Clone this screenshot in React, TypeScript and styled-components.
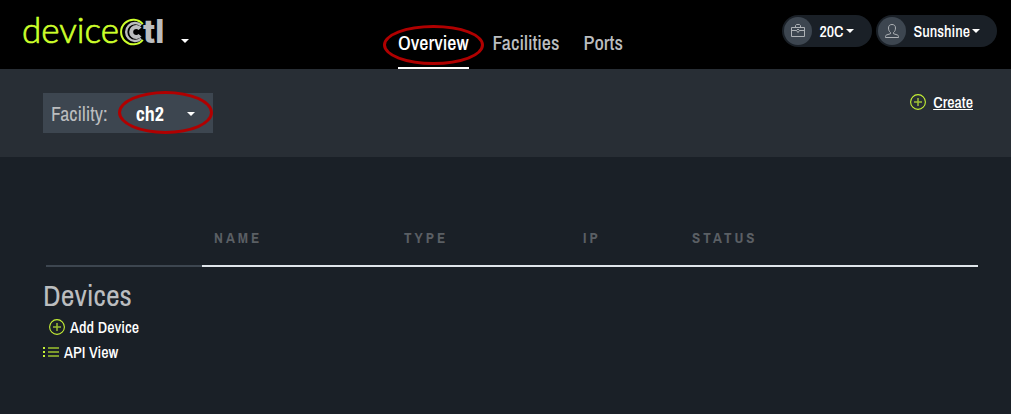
import React from 'react';
import styled, { createGlobalStyle, css } from 'styled-components';

const GlobalStyle = createGlobalStyle`
  * { box-sizing: border-box; }
  body {
    margin: 0;
    background: #1a2027;
    color: #fff;
    font-family: 'Archivo Narrow', 'Liberation Sans Narrow', 'Arial Narrow', 'Liberation Sans', sans-serif;
    font-size: 16px;
  }
  button, select { font: inherit; color: inherit; background: none; border: 0; padding: 0; margin: 0; cursor: pointer; }
  a { color: inherit; text-decoration: none; }
`;

const Header = styled.header`
  display: grid;
  grid-template-columns: 1fr auto 1fr;
  background: #000;
  height: 69px;
  padding: 0 14px 0 24px;
`;

const Brand = styled.div`
  display: flex;
  align-items: flex-start;
  margin-left: -4px;
  padding-top: 8px;
  gap: 15px;
`;

const BrandMenu = styled.button`
  display: flex;
  padding-top: 31px;
`;

const Nav = styled.nav`
  display: flex;
  gap: 24px;
  align-items: flex-end;
`;

const NavLink = styled.a<{ $active?: boolean }>`
  position: relative;
  height: 40px;
  line-height: 28px;
  font-size: 20px;
  font-weight: 500;
  color: ${p => (p.$active ? '#fff' : '#bbbdbf')};
  border-bottom: 2px solid ${p => (p.$active ? '#fff' : 'transparent')};
`;

const Ring = styled.span<{ $inset: string }>`
  position: absolute;
  inset: ${p => p.$inset};
  border: 3px solid #b00000;
  border-radius: 50%;
  pointer-events: none;
`;

const Account = styled.div`
  display: flex;
  justify-content: flex-end;
  align-items: flex-start;
  gap: 4px;
  padding-top: 15px;
`;

const Pill = styled.button`
  display: flex;
  align-items: center;
  min-width: 90px;
  height: 32px;
  padding: 0 17px 0 2px;
  border-radius: 16px;
  background: #1a2027;
  font-weight: 500;
  gap: 2px;
`;

const Avatar = styled.span`
  display: flex;
  align-items: center;
  justify-content: center;
  width: 28px;
  height: 28px;
  margin-right: 5px;
  border-radius: 50%;
  background: #3d4650;
`;

const Toolbar = styled.section`
  display: flex;
  justify-content: space-between;
  align-items: flex-start;
  background: #282e35;
  padding: 24px 38px 24px 43px;
`;

const FacilityPicker = styled.div`
  position: relative;
  display: flex;
  align-items: center;
  height: 40px;
  padding-left: 8px;
  background: #3d4650;
  font-size: 20px;
  label { color: #bbbdbf; }
`;

const FacilitySelect = styled.select`
  appearance: none;
  width: 105px;
  height: 40px;
  padding-left: 28px;
  font-weight: 700;
  outline: 0;
`;

const SelectCaret = styled.span`
  position: absolute;
  right: 18px;
  top: 19px;
  display: flex;
  pointer-events: none;
`;

const action = css`
  display: flex;
  align-items: center;
  line-height: 18px;
  font-weight: 500;
`;

const CreateLink = styled.a`
  ${action}
  gap: 7px;
  span { text-decoration: underline; }
`;

const Main = styled.main`
  padding: 71px 33px 40px 43px;
`;

const DeviceTable = styled.table`
  width: calc(100% - 3px);
  margin-left: 3px;
  table-layout: fixed;
  border-spacing: 0;
`;

const HeadCell = styled.th<{ $width?: string; $blank?: boolean }>`
  width: ${p => p.$width || 'auto'};
  height: 39px;
  padding: 0 0 0 12px;
  vertical-align: top;
  text-align: left;
  font-size: 15px;
  line-height: 20px;
  letter-spacing: 3px;
  color: #5a5f64;
  border-bottom: 2px solid ${p => (p.$blank ? '#3d4650' : '#dfe5ea')};
`;

const Title = styled.h2`
  margin: 10px 0 0;
  font-size: 30px;
  line-height: 36px;
  font-weight: 400;
  color: #bbbdbf;
`;

const Actions = styled.div`
  display: flex;
  flex-direction: column;
  align-items: flex-start;
  gap: 7px;
  margin-top: 5px;
`;

const ActionButton = styled.button<{ $indent?: boolean }>`
  ${action}
  gap: 5px;
  margin-left: ${p => (p.$indent ? '6px' : '0')};
`;

const Caret = () => (
  <svg width="8" height="4" viewBox="0 0 8 4" aria-hidden="true"><path d="M0 0h8L4 4z" fill="#fff" /></svg>
);

const Plus = () => (
  <svg width="16" height="16" viewBox="0 0 16 16" fill="none" stroke="#c6f135" aria-hidden="true">
    <circle cx="8" cy="8" r="7.4" strokeWidth="1.1" />
    <path d="M4 8h8M8 4v8" strokeWidth="1.5" opacity=".75" />
  </svg>
);

const ListIcon = () => (
  <svg width="16" height="12" viewBox="0 0 16 12" aria-hidden="true">
    <path d="M0 1h2v2H0zM0 5h2v2H0zM0 9h2v2H0z" fill="#c6f135" />
    <path d="M5 1h11v2H5zM5 5h11v2H5zM5 9h11v2H5z" fill="#7c9a2c" />
  </svg>
);

const Briefcase = () => (
  <svg width="14" height="14" viewBox="0 0 14 14" fill="none" stroke="#aeb2b6" aria-hidden="true">
    <path d="M.5 3.5h13v9H.5zM4.500 3.500v-2l1-1h3l1 1v2M.5 6.500h5M8.500 6.500h5M7 5l1.500 1.500L7 8.500 5.500 6.500z" />
  </svg>
);

const Person = () => (
  <svg width="14" height="14" viewBox="0 0 14 14" fill="none" stroke="#aeb2b6" aria-hidden="true">
    <path d="M5.500 8.500C4 7.500 3.500 5.500 3.500 4 3.500 1.500 5 .5 7 .5s3.500 1 3.500 3.500c0 1.500-.5 3.500-2 4.500v1.200l4 1.300c.8.300 1 .8 1 2.500H.5c0-1.700.2-2.200 1-2.500l4-1.300z" />
  </svg>
);

const Logo = () => (
  <svg width="146" height="48" viewBox="-2 0 146 48" role="img" aria-label="devicectl">
    <text x="0" y="35" fontFamily="Lato" fontSize="35" fontWeight="300" fill="#cdff2b" stroke="#cdff2b" strokeWidth=".7">device</text>
    <path d="M120.800 16.100A12.300 12.300 0 1 0 120.800 31.900" fill="none" stroke="#cdff2b" strokeWidth="2" />
    <path d="M119.200 17.300A9 9 0 1 0 119.200 30.700" fill="none" stroke="#bbbdbf" strokeWidth="2.400" />
    <path d="M118 20.800A5 5 0 1 0 118 27.200" fill="none" stroke="#bbbdbf" strokeWidth="4" />
    <text x="121" y="35" fontFamily="Inter" fontWeight="800" fontSize="32" fill="#bbbdbf">tl</text>
  </svg>
);

export default function App() {
  return (
    <>
      <GlobalStyle />
      <Header>
        <Brand>
          <Logo />
          <BrandMenu aria-label="Switch application"><Caret /></BrandMenu>
        </Brand>
        <Nav>
          <NavLink href="#overview" $active>Overview<Ring $inset="-4px -15px 2px -15px" /></NavLink>
          <NavLink href="#facilities">Facilities</NavLink>
          <NavLink href="#ports">Ports</NavLink>
        </Nav>
        <Account>
          <Pill><Avatar><Briefcase /></Avatar>20C<Caret /></Pill>
          <Pill><Avatar><Person /></Avatar>Sunshine<Caret /></Pill>
        </Account>
      </Header>
      <Toolbar>
        <FacilityPicker>
          <label htmlFor="facility">Facility:</label>
          <FacilitySelect id="facility" defaultValue="ch2"><option value="ch2">ch2</option></FacilitySelect>
          <SelectCaret><Caret /></SelectCaret>
          <Ring $inset="-2px 0 -1px 75px" />
        </FacilityPicker>
        <CreateLink href="#create"><Plus /><span>Create</span></CreateLink>
      </Toolbar>
      <Main>
        <DeviceTable>
          <thead>
            <tr>
              <HeadCell as="td" $width="16.740%" $blank />
              <HeadCell scope="col" $width="20.390%">NAME</HeadCell>
              <HeadCell scope="col" $width="19.210%">TYPE</HeadCell>
              <HeadCell scope="col" $width="11.700%">IP</HeadCell>
              <HeadCell scope="col">STATUS</HeadCell>
            </tr>
          </thead>
        </DeviceTable>
        <Title>Devices</Title>
        <Actions>
          <ActionButton $indent><Plus />Add Device</ActionButton>
          <ActionButton><ListIcon />API View</ActionButton>
        </Actions>
      </Main>
    </>
  );
}
